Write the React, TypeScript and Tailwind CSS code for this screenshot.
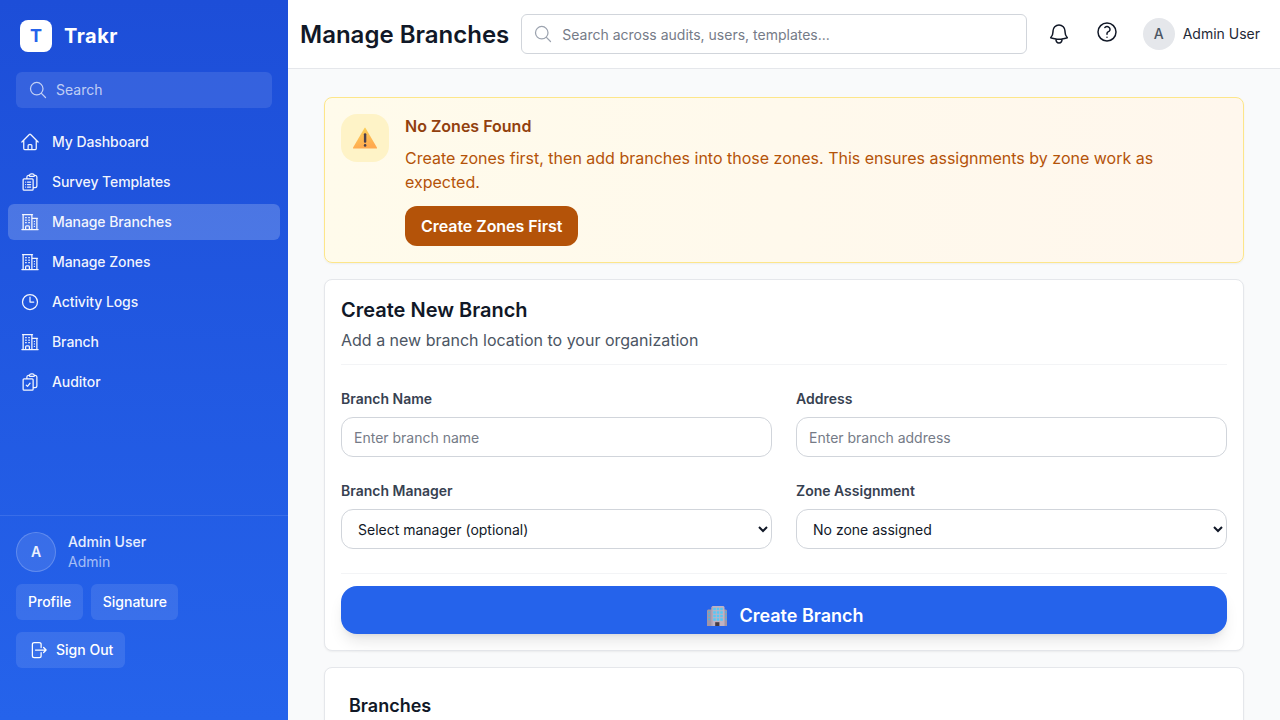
import type { ReactNode } from 'react';
import {
  HiOutlineArrowRightOnRectangle,
  HiOutlineBell,
  HiOutlineBuildingOffice2,
  HiOutlineClipboardDocumentCheck,
  HiOutlineClipboardDocumentList,
  HiOutlineClock,
  HiOutlineHome,
  HiOutlineMagnifyingGlass,
  HiOutlineQuestionMarkCircle,
} from 'react-icons/hi2';

const navItems = [
  { label: 'My Dashboard', icon: HiOutlineHome },
  { label: 'Survey Templates', icon: HiOutlineClipboardDocumentList },
  { label: 'Manage Branches', icon: HiOutlineBuildingOffice2, active: true },
  { label: 'Manage Zones', icon: HiOutlineBuildingOffice2 },
  { label: 'Activity Logs', icon: HiOutlineClock },
  { label: 'Branch', icon: HiOutlineBuildingOffice2 },
  { label: 'Auditor', icon: HiOutlineClipboardDocumentCheck },
];

function WarningIcon() {
  return (
    <svg viewBox="0 0 24 22" className="h-[22px] w-6" aria-hidden="true">
      <defs>
        <linearGradient id="warn" x1="0" y1="0" x2="0.3" y2="1">
          <stop offset="0" stopColor="#fbd65b" />
          <stop offset="1" stopColor="#ffa94f" />
        </linearGradient>
      </defs>
      <path d="M11.5 .9Q12 .1 12.500 .9L23.900 20.600Q24.300 21.600 23.400 21.600H.6Q-.3 21.600 .1 20.600Z" fill="url(#warn)" />
      <rect x="10.9" y="6.2" width="2.400" height="9.600" rx="1.1" fill="#4a3f4d" />
      <circle cx="12.1" cy="18.400" r="1.300" fill="#4a3f4d" />
    </svg>
  );
}

function OfficeIcon() {
  return (
    <svg viewBox="0 0 20 20" className="h-5 w-5" aria-hidden="true">
      <path d="M0 4.500l1-1h4V20H0zM15 3.500h4l1 1V20h-5z" fill="#a295a5" />
      <path d="M4.500 1l1-1h11l1 1v19h-13z" fill="#bfb2c3" />
      <path d="M4.500 1h1v19h-1z" fill="#a99cae" />
      <path
        d="M6.200 1.800h2.600v2.400H6.200zM9.700 1.800h2.600v2.400H9.700zM13.200 1.800h2.600v2.400h-2.600zM6.200 5.300h2.600v2.400H6.200zM9.700 5.300h2.600v2.400H9.700zM13.200 5.300h2.600v2.400h-2.600zM6.200 8.800h2.600v2.400H6.200zM9.700 8.800h2.600v2.400H9.700zM13.200 8.800h2.600v2.400h-2.600zM6.200 12.300h2.600v2.400H6.200zM9.700 12.300h2.600v2.400H9.700zM13.200 12.300h2.600v2.400h-2.600z"
        fill="#55c8f7"
      />
      <path
        d="M1.200 5.300h2v2h-2zM1.200 8.800h2v2h-2zM1.200 12.300h2v2h-2zM18 5.300h1.500v2H18zM18 8.800h1.500v2H18zM18 12.300h1.500v2H18z"
        fill="#54afe0"
      />
      <path d="M8.200 16.200h4.200V20H8.200z" fill="#473b42" />
    </svg>
  );
}

function Sidebar() {
  return (
    <aside className="flex w-72 shrink-0 flex-col bg-linear-to-b/srgb from-[#1d4ed8] to-[#2563eb] text-white">
      <div className="flex items-center gap-3 px-5 pt-5 pb-5">
        <div className="flex size-8 items-center justify-center rounded-lg bg-white text-lg leading-7 font-bold text-[#2563eb]">
          T
        </div>
        <span className="text-xl font-bold tracking-wide">Trakr</span>
      </div>
      <div className="mx-4 flex h-9 items-center gap-2 rounded-md bg-white/10 px-3 text-white/70">
        <HiOutlineMagnifyingGlass className="size-5" />
        <span className="text-sm">Search</span>
      </div>
      <nav className="mt-4 flex flex-1 flex-col gap-1 px-2 tracking-[-0.005em]">
        {navItems.map(({ label, icon: Icon, active }) => (
          <a
            key={label}
            className={
              active
                ? 'flex h-9 items-center gap-3 rounded-md bg-white/20 px-3 text-sm font-medium text-white/95'
                : 'flex h-9 items-center gap-3 rounded-md px-3 text-sm font-medium text-white/95'
            }
          >
            <Icon className="size-5" />
            {label}
          </a>
        ))}
      </nav>
      <div className="border-t border-white/10 px-4 pt-4 pb-[52px] text-sm font-medium">
        <div className="flex items-center gap-3">
          <div className="flex size-10 items-center justify-center rounded-full border border-white/20 bg-white/10 font-semibold text-white/90">
            A
          </div>
          <div>
            <div className="text-white/90">Admin User</div>
            <div className="font-normal text-white/60">Admin</div>
          </div>
        </div>
        <div className="mt-3 flex gap-2">
          <button className="h-9 rounded-md bg-white/10 px-3">Profile</button>
          <button className="h-9 rounded-md bg-white/10 px-[11.500px]">Signature</button>
        </div>
        <button className="mt-3 flex h-9 items-center gap-2 rounded-md bg-white/10 px-3">
          <HiOutlineArrowRightOnRectangle className="size-5" />
          Sign Out
        </button>
      </div>
    </aside>
  );
}

function Header() {
  return (
    <header className="flex h-[69px] shrink-0 items-center border-b border-[#e5e7eb] bg-white pr-5 pl-3">
      <h1 className="mr-3 pt-0.5 text-2xl font-semibold whitespace-nowrap text-[#111827]">Manage Branches</h1>
      <div className="flex h-10 flex-1 items-center gap-[9px] rounded-md border border-[#d1d5db] px-[11px] text-sm">
        <HiOutlineMagnifyingGlass className="size-5 shrink-0 text-[#9ca3af]" />
        <input
          className="w-full bg-transparent pt-0.5 outline-none placeholder:text-[#757b87]"
          placeholder="Search across audits, users, templates..."
        />
      </div>
      <button className="ml-3 flex size-10 items-center justify-center text-[#111827]">
        <HiOutlineBell className="size-6" />
      </button>
      <button className="ml-2 flex size-10 items-center justify-center pb-1 text-[#111827]">
        <HiOutlineQuestionMarkCircle className="size-6" />
      </button>
      <div className="ml-4 flex items-center gap-2 text-sm">
        <div className="flex size-8 items-center justify-center rounded-full bg-[#e5e7eb] font-medium text-[#4b5563]">
          A
        </div>
        <span className="whitespace-nowrap text-[#1f2937]">Admin User</span>
      </div>
    </header>
  );
}

function Field({ label, children }: { label: string; children: ReactNode }) {
  return (
    <label className="flex flex-col gap-2 text-sm">
      <span className="font-semibold text-[#374151]">{label}</span>
      {children}
    </label>
  );
}

const inputClass =
  'h-10 w-full rounded-xl border border-[#d1d5db] bg-white px-3 text-sm text-[#111827] placeholder:text-[#757b87]';

export default function App() {
  return (
    <div className="flex h-screen overflow-hidden bg-[#f9fafb] font-['Inter',sans-serif]">
      <Sidebar />
      <div className="flex min-w-0 flex-1 flex-col">
        <Header />
        <main className="flex min-h-0 flex-1 flex-col gap-4 overflow-hidden px-9 pt-7">
          <section className="flex shrink-0 gap-4 rounded-lg border border-[#fde68a] bg-linear-to-r/srgb from-[#fffbeb] to-[#fff7ed] p-4 shadow-xs">
            <div className="flex size-12 shrink-0 items-center justify-center rounded-2xl bg-[#fef3c7]">
              <WarningIcon />
            </div>
            <div>
              <h3 className="font-semibold text-[#92400e]">No Zones Found</h3>
              <p className="mt-2 text-[#b45309]">
                Create zones first, then add branches into those zones. This ensures assignments by zone work as
                expected.
              </p>
              <button className="mt-3 h-10 rounded-xl bg-[#b45309] px-4 font-semibold tracking-[-0.003em] text-white">
                Create Zones First
              </button>
            </div>
          </section>

          <section className="shrink-0 rounded-lg border border-[#e5e7eb] bg-white p-4 shadow-xs">
            <div className="border-b border-[#f3f4f6] pb-3">
              <h2 className="text-xl font-semibold text-[#111827]">Create New Branch</h2>
              <p className="mt-1 text-[#4b5563]">Add a new branch location to your organization</p>
            </div>
            <div className="grid grid-cols-2 gap-6 py-6">
              <Field label="Branch Name">
                <input className={inputClass} placeholder="Enter branch name" />
              </Field>
              <Field label="Address">
                <input className={inputClass} placeholder="Enter branch address" />
              </Field>
              <Field label="Branch Manager">
                <select className={inputClass}>
                  <option>Select manager (optional)</option>
                </select>
              </Field>
              <Field label="Zone Assignment">
                <select className={inputClass}>
                  <option>No zone assigned</option>
                </select>
              </Field>
            </div>
            <div className="border-t border-[#f3f4f6] pt-3">
              <button className="flex h-12 w-full items-center justify-center gap-3 rounded-2xl bg-[#2563eb] pt-3 pl-[3px] text-lg font-semibold text-white shadow-lg">
                <OfficeIcon />
                Create Branch
              </button>
            </div>
          </section>

          <section className="shrink-0 rounded-lg border border-[#e5e7eb] bg-white p-6 shadow-xs">
            <h2 className="text-lg font-semibold text-[#111827]">Branches</h2>
          </section>
        </main>
      </div>
    </div>
  );
}
